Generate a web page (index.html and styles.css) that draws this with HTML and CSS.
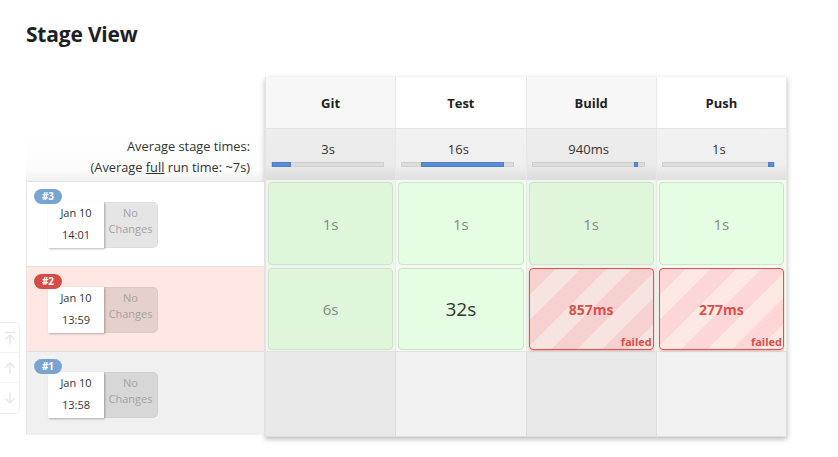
FILE: index.html
```html
<!DOCTYPE html>
<html lang="en">
<head>
<meta charset="utf-8">
<title>Stage View</title>
<link rel="stylesheet" href="styles.css">
</head>
<body>
<div class="page">
  <h1 class="title">Stage View</h1>
  <div class="stage-view">
    <div class="runs">
      <div class="runs-head"></div>
      <div class="runs-avg">
        <div>Average stage times:</div>
        <div>(Average <u>full</u> run time: ~7s)</div>
      </div>
      <div class="run run-ok">
        <span class="badge badge-blue">#3</span>
        <div class="run-info">
          <div class="run-date"><div>Jan 10</div><div>14:01</div></div>
          <div class="run-changes">No<br>Changes</div>
        </div>
      </div>
      <div class="run run-failed">
        <span class="badge badge-red">#2</span>
        <div class="run-info">
          <div class="run-date"><div>Jan 10</div><div>13:59</div></div>
          <div class="run-changes">No<br>Changes</div>
        </div>
      </div>
      <div class="run run-old">
        <span class="badge badge-blue">#1</span>
        <div class="run-info">
          <div class="run-date"><div>Jan 10</div><div>13:58</div></div>
          <div class="run-changes">No<br>Changes</div>
        </div>
      </div>
    </div>
    <div class="stages">
      <div class="head odd">Git</div>
      <div class="head even">Test</div>
      <div class="head odd">Build</div>
      <div class="head even">Push</div>

      <div class="avg odd"><div class="avg-time">3s</div><div class="bar"><div class="fill" style="left:0%;width:17%"></div></div></div>
      <div class="avg even"><div class="avg-time">16s</div><div class="bar"><div class="fill" style="left:17%;width:75%"></div></div></div>
      <div class="avg odd"><div class="avg-time">940ms</div><div class="bar"><div class="fill" style="left:91%;width:4%"></div></div></div>
      <div class="avg even"><div class="avg-time">1s</div><div class="bar"><div class="fill" style="left:95%;width:5%"></div></div></div>

      <div class="td odd"><div class="box ok ok-odd">1s</div></div>
      <div class="td even"><div class="box ok ok-even">1s</div></div>
      <div class="td odd"><div class="box ok ok-odd">1s</div></div>
      <div class="td even"><div class="box ok ok-even">1s</div></div>

      <div class="td odd"><div class="box ok ok-odd">6s</div></div>
      <div class="td even"><div class="box ok ok-even long">32s</div></div>
      <div class="td odd"><div class="box fail fail-odd">857ms<span class="fail-label">failed</span></div></div>
      <div class="td even"><div class="box fail fail-even">277ms<span class="fail-label">failed</span></div></div>

      <div class="td empty odd"></div>
      <div class="td empty even"></div>
      <div class="td empty odd"></div>
      <div class="td empty even"></div>
    </div>
  </div>
  <div class="scroller">
    <div class="scroll-btn">
      <svg width="12" height="14" viewBox="0 0 12 14"><path d="M1 1.5H11M6 4V13.5M1.5 8.5L6 4L10.5 8.5" fill="none" stroke="currentColor" stroke-width="1.4"/></svg>
    </div>
    <div class="scroll-btn">
      <svg width="12" height="12" viewBox="0 0 12 12"><path d="M6 1V11.5M1.5 5.5L6 1L10.5 5.5" fill="none" stroke="currentColor" stroke-width="1.4"/></svg>
    </div>
    <div class="scroll-btn">
      <svg width="12" height="12" viewBox="0 0 12 12"><path d="M6 0.5V11M1.5 6.5L6 11L10.5 6.5" fill="none" stroke="currentColor" stroke-width="1.4"/></svg>
    </div>
  </div>
</div>
</body>
</html>
```

FILE: styles.css
```css
* { box-sizing: border-box; }
html, body { margin: 0; padding: 0; background: #fff; }
body {
  font-family: "Open Sans", "Noto Sans", "Liberation Sans", sans-serif;
  color: #333;
  width: 838px;
  height: 457px;
  overflow: hidden;
}
.page {
  position: relative;
  padding: 20px 0 0 26px;
  height: 457px;
}
.title {
  margin: 0 0 28px 0;
  font-size: 21px;
  line-height: 29px;
  font-weight: 700;
  color: #1f1f24;
  letter-spacing: -0.2px;
}
.stage-view {
  display: flex;
  align-items: flex-start;
  gap: 1px;
}

/* left column: runs */
.runs {
  width: 238px;
  display: flex;
  flex-direction: column;
}
.runs-head { height: 51px; }
.runs-avg {
  height: 53px;
  padding: 8px 14px 0 0;
  text-align: right;
  font-size: 12.8px;
  line-height: 21px;
  color: #333;
  background: linear-gradient(to bottom, #fff 0%, #fcfcfc 80%, #f1f1f1 100%);
}
.run {
  position: relative;
  height: 85px;
  border-left: 1px solid #e6e6e6;
  border-top: 1px solid #e2e2e2;
  padding: 20px 0 0 21px;
}
.run-ok { background: #fff; }
.run-failed { background: #ffe8e4; }
.run-old { background: #f0f0f0; height: 84px; }
.badge {
  position: absolute;
  left: 7px;
  top: 7px;
  width: 28px;
  height: 15px;
  border-radius: 8px;
  color: #fff;
  font-size: 10px;
  font-weight: 700;
  line-height: 15px;
  text-align: center;
  z-index: 2;
}
.badge-blue { background: #7aa4d0; }
.badge-red { background: #d64b46; }
.run-info {
  display: flex;
  width: 110px;
}
.run-date {
  width: 56px;
  height: 46px;
  background: #fff;
  box-shadow: 1px 1px 2px rgba(0, 0, 0, 0.28);
  text-align: center;
  font-size: 11px;
  line-height: 22px;
  color: #333;
  position: relative;
  z-index: 1;
}
.run-changes {
  width: 54px;
  height: 46px;
  background: rgba(0, 0, 0, 0.1);
  border: 1px solid rgba(0, 0, 0, 0.04);
  border-left: none;
  border-radius: 0 5px 5px 0;
  text-align: center;
  font-size: 11px;
  line-height: 16px;
  padding-top: 2px;
  color: #a3a3a3;
}

/* stage table */
.stages {
  width: 522px;
  display: grid;
  grid-template-columns: repeat(4, 1fr);
  grid-template-rows: 51px 52px 86px 85px 86px;
  box-shadow: 0 2px 5px rgba(0, 0, 0, 0.28);
  border-left: 1px solid #e4e4e4;
}
.head {
  display: flex;
  align-items: center;
  justify-content: center;
  font-size: 13px;
  font-weight: 700;
  color: #222;
  border-right: 1px solid #e8e8e8;
}
.head.odd { background: #f7f7f7; }
.head.even { background: #fff; }
.avg {
  padding: 11px 0 0 5px;
  border-right: 1px solid #e8e8e8;
  border-top: 1px solid #e4e4e4;
}
.avg.odd { background: linear-gradient(to bottom, #ededed 0%, #eaeaea 70%, #dcdcdc 100%); }
.avg.even { background: linear-gradient(to bottom, #f2f2f2 0%, #efefef 70%, #e0e0e0 100%); }
.avg-time {
  text-align: center;
  font-size: 13px;
  line-height: 18px;
  color: #333;
  padding-right: 10px;
}
.bar {
  position: relative;
  margin-top: 4px;
  width: 113px;
  height: 5px;
  background: #dcdcdc;
  border: 1px solid #cfcfcf;
}
.fill {
  position: absolute;
  top: -1px;
  bottom: -1px;
  background: #5b8dd5;
  border: 1px solid #4f7fc4;
}
.td {
  padding: 2px 2px 1px 2px;
  border-right: 1px solid #e4ece3;
}
.td.odd { background: #eef5ed; }
.td.even { background: #f3faf2; }
.box {
  position: relative;
  height: 100%;
  border-radius: 4px;
  display: flex;
  align-items: center;
  justify-content: center;
  font-size: 15px;
}
.ok {
  border: 1px solid #cfe3cb;
  color: #858a85;
}
.ok-odd { background: #dff6db; }
.ok-even { background: #e5fde2; }
.long { font-size: 19px; color: #333; }
.fail {
  border: 1px solid #e0544f;
  box-shadow: 0 1px 2px rgba(210, 40, 40, 0.35);
  color: #d9504b;
  font-weight: 700;
  font-size: 14px;
}
.fail-odd {
  background: repeating-linear-gradient(135deg, #f7d0d0 0, #f7d0d0 18px, #f7e4e0 18px, #f7e4e0 36px);
}
.fail-even {
  background: repeating-linear-gradient(135deg, #fdd7d7 0, #fdd7d7 18px, #fee8e4 18px, #fee8e4 36px);
}
.fail-label {
  position: absolute;
  right: 1px;
  bottom: 1px;
  font-size: 11px;
  line-height: 13px;
  font-weight: 700;
}
.td.empty {
  border-right: 1px solid #dedede;
  border-top: 1px solid #e2e2e2;
  border-bottom: 1px solid #dedede;
}
.td.empty.odd { background: #e9e9e9; }
.td.empty.even { background: #f2f2f2; }

/* floating scroll control */
.scroller {
  position: absolute;
  left: -6px;
  top: 322px;
  width: 26px;
  border: 1px solid #f0f0f0;
  border-radius: 4px;
  display: flex;
  flex-direction: column;
  color: #e6e6e6;
}
.scroll-btn {
  height: 30px;
  display: flex;
  align-items: center;
  justify-content: center;
  padding-left: 6px;
  border-bottom: 1px solid #f3f3f3;
}
.scroll-btn:last-child { border-bottom: none; }
```
